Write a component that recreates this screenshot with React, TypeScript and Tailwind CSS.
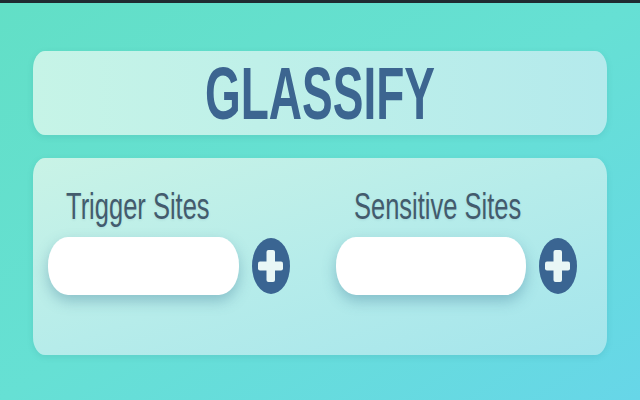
import React from "react";

function PlusButton() {
  return (
    <svg width="38" height="56" viewBox="0 0 38 56" preserveAspectRatio="none" className="shrink-0">
      <ellipse cx="19" cy="28" rx="19" ry="28" fill="#3a6592" />
      <rect x="6" y="23.5" width="25" height="9" rx="2" fill="#e9f7f6" />
      <rect x="14.5" y="12" width="8.5" height="32" rx="2" fill="#e9f7f6" />
    </svg>
  );
}

function Column({ label, inputW }: { label: string; inputW: string }) {
  return (
    <div className="flex flex-col">
      <div className="ml-[18px] h-[25px] leading-[25px] text-[25.5px] text-[#435b6d] [font-family:'Liberation_Sans',Arial,sans-serif] whitespace-nowrap">
        <span className="inline-block origin-center scale-y-[1.45] [text-shadow:0_1px_2px_rgba(60,110,140,0.15)]">{label}</span>
      </div>
      <div className="mt-[18px] flex items-center gap-[13px]">
        <div
          className={`${inputW} h-[58px] rounded-[20px_/_28px] bg-white shadow-[0_6px_14px_rgba(50,110,140,0.35)]`}
        />
        <PlusButton />
      </div>
    </div>
  );
}

export default function App() {
  return (
    <div className="w-[640px] h-[400px] overflow-hidden flex flex-col bg-gradient-to-br from-[#62dfc6] via-[#66e0d4] to-[#67d6e8]">
      <div className="h-[3px] bg-[#1f2b31] shrink-0" />
      <div className="px-[33px] pt-[48px] flex flex-col gap-[23px]">
        <div className="h-[84px] rounded-[12px_/_18px] bg-gradient-to-r from-[#c6f4e7] to-[#b4eaec] shadow-[0_2px_6px_rgba(40,120,130,0.15)] flex items-center justify-center">
          <span className="inline-block origin-center scale-y-[1.6] text-[46px] leading-[46px] font-bold text-[#3c6590] [font-family:'Liberation_Sans',Arial,sans-serif]">
            GLASSIFY
          </span>
        </div>
        <div className="h-[197px] rounded-[12px_/_18px] bg-gradient-to-br from-[#c9f3e6] via-[#b6ecea] to-[#a4e5ec] shadow-[0_2px_6px_rgba(40,120,130,0.15)] pl-[15px] pt-[36px] flex gap-[46px]">
          <Column label="Trigger Sites" inputW="w-[191px]" />
          <Column label="Sensitive Sites" inputW="w-[190px]" />
        </div>
      </div>
    </div>
  );
}
